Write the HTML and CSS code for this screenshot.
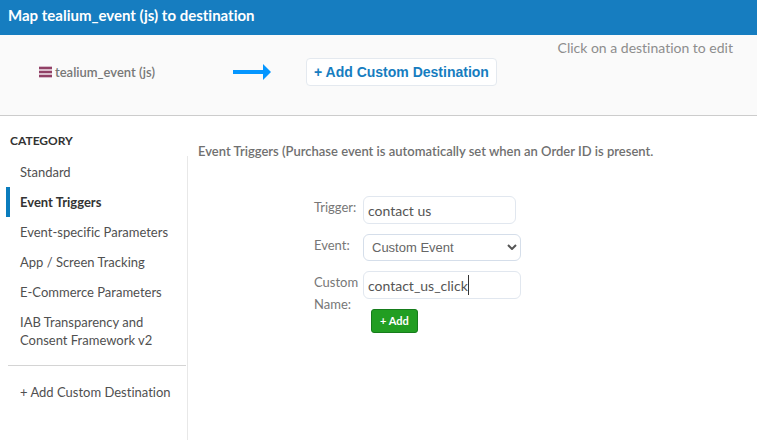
FILE: index.html
```html
<!DOCTYPE html>
<html lang="en">
<head>
<meta charset="utf-8">
<title>Map tealium_event (js) to destination</title>
<link rel="stylesheet" href="styles.css">
</head>
<body>
<header class="title-bar"><h1>Map tealium_event (js) to destination</h1></header>
<section class="mapping">
  <div class="source">
    <svg class="source-icon" width="13" height="12" viewBox="0 0 13 12" aria-hidden="true"><path fill="#d9bccb" d="M0 0h13v12H0z"/><path fill="#914166" d="M0 1h13v2H0zM0 5h13v2H0zM0 9h13v2H0z"/></svg>
    <span>tealium_event (js)</span>
  </div>
  <svg class="arrow" width="38" height="16" viewBox="0 0 38 16" aria-hidden="true"><path fill="#0496ff" d="M0 6h30V0l8 8-8 8v-6H0z"/></svg>
  <button class="destination" type="button">+ Add Custom Destination</button>
  <p class="hint">Click on a destination to edit</p>
</section>
<main class="body">
  <aside class="sidebar">
    <h2>CATEGORY</h2>
    <nav class="categories">
      <a class="item" href="#">Standard</a>
      <a class="item active" href="#" aria-current="true">Event Triggers</a>
      <a class="item" href="#">Event-specific Parameters</a>
      <a class="item" href="#">App / Screen Tracking</a>
      <a class="item" href="#">E-Commerce Parameters</a>
      <a class="item" href="#">IAB Transparency and Consent Framework v2</a>
      <hr>
      <a class="item" href="#">+ Add Custom Destination</a>
    </nav>
  </aside>
  <section class="panel">
    <h3>Event Triggers (Purchase event is automatically set when an Order ID is present.</h3>
    <form class="form">
      <label for="trigger">Trigger:</label>
      <div><input class="field short" id="trigger" type="text" value="contact us"></div>
      <label for="event">Event:</label>
      <div class="control">
        <select class="field" id="event"><option>Custom Event</option></select>
        <svg class="chevron" width="10" height="6" viewBox="0 0 10 6" aria-hidden="true"><path d="M1 1l4 4 4-4" fill="none" stroke="#555" stroke-width="2"/></svg>
      </div>
      <label for="custom">Custom Name:</label>
      <div>
        <div class="control"><input class="field" id="custom" type="text" value="contact_us_click"><span class="caret"></span></div>
        <button class="add" type="button">+ Add</button>
      </div>
    </form>
  </section>
</main>
</body>
</html>
```
FILE: styles.css
```css
* { box-sizing: border-box; }
body {
  margin: 0;
  min-height: 100vh;
  display: flex;
  flex-direction: column;
  background: #fff;
  color: #484848;
  font: 13px/18px Lato, "Open Sans", sans-serif;
  font-variant-ligatures: none;
}
h1, h2, h3, p { margin: 0; }
.title-bar {
  padding: 4px 8px 9px;
  background: #167dc0;
  color: #fff;
}
h1 { font-size: 15px; line-height: 22px; font-weight: 700; }
.mapping {
  display: grid;
  grid-template-columns: 194px 73px auto 1fr;
  align-items: center;
  padding: 4px 24px 10px 39px;
  min-height: 81px;
  background: #fafafa;
  border-bottom: 1px solid #ccc;
}
.source {
  display: flex;
  align-items: center;
  gap: 3px;
  color: #777;
  font-weight: 600;
}
.destination {
  height: 28px;
  padding: 0 7px;
  border: 1px solid #e4e9ef;
  border-radius: 4px;
  background: #fff;
  color: #167dc0;
  font: bold 14px/18px "Liberation Sans", sans-serif;
}
.hint {
  align-self: start;
  text-align: right;
  color: #8d8d8d;
  font-size: 14px;
}
.body { flex: 1; display: flex; }
.sidebar {
  width: 188px;
  flex: none;
  display: flex;
  flex-direction: column;
  padding-top: 16px;
}
h2 {
  padding-left: 10px;
  margin-bottom: 6px;
  color: #333;
  font-size: 12px;
  line-height: 18px;
  font-weight: 700;
}
.categories { flex: 1; border-right: 1px solid #e8e8e8; padding: 1px 0 0 6px; }
.item {
  display: block;
  padding: 6px 12px 6px 10px;
  border-left: 4px solid transparent;
  color: #505050;
  text-decoration: none;
}
.active { border-color: #0a7cbd; color: #333; font-weight: 700; }
hr { margin: 10px 1px 11px 2px; border: 0; border-top: 1px solid #d4d4d4; }
.panel { flex: 1; padding: 26px 10px; color: #707070; }
h3 { font-size: 13px; line-height: 18px; font-weight: 600; }
.form {
  display: grid;
  grid-template-columns: 49px 158px;
  row-gap: 10px;
  margin: 36px 0 0 116px;
}
.form label { line-height: 22px; color: #777; }
.control { position: relative; }
.field {
  display: block;
  width: 100%;
  height: 28px;
  padding: 0 4px;
  border: 1px solid #e1e7ef;
  border-radius: 6px;
  background: #fff;
  color: #555;
  font: 14px/18px Lato, "Open Sans", sans-serif;
}
.short { width: 153px; }
select.field {
  appearance: none;
  height: 27px;
  padding: 0 8px;
  border-color: #d5deea;
  color: #666;
  font-family: "Liberation Sans", sans-serif;
  font-size: 13px;
}
.chevron { position: absolute; right: 4px; top: 10px; pointer-events: none; }
.caret { position: absolute; left: 105px; top: 4px; width: 1px; height: 20px; background: #333; }
.add {
  display: block;
  height: 24px;
  margin: 10px 0 0 8px;
  padding: 0 8px;
  border: 1px solid #167c1b;
  border-radius: 3px;
  background: #229e22;
  color: #fff;
  font: bold 11px/18px Lato, "Open Sans", sans-serif;
}
```
